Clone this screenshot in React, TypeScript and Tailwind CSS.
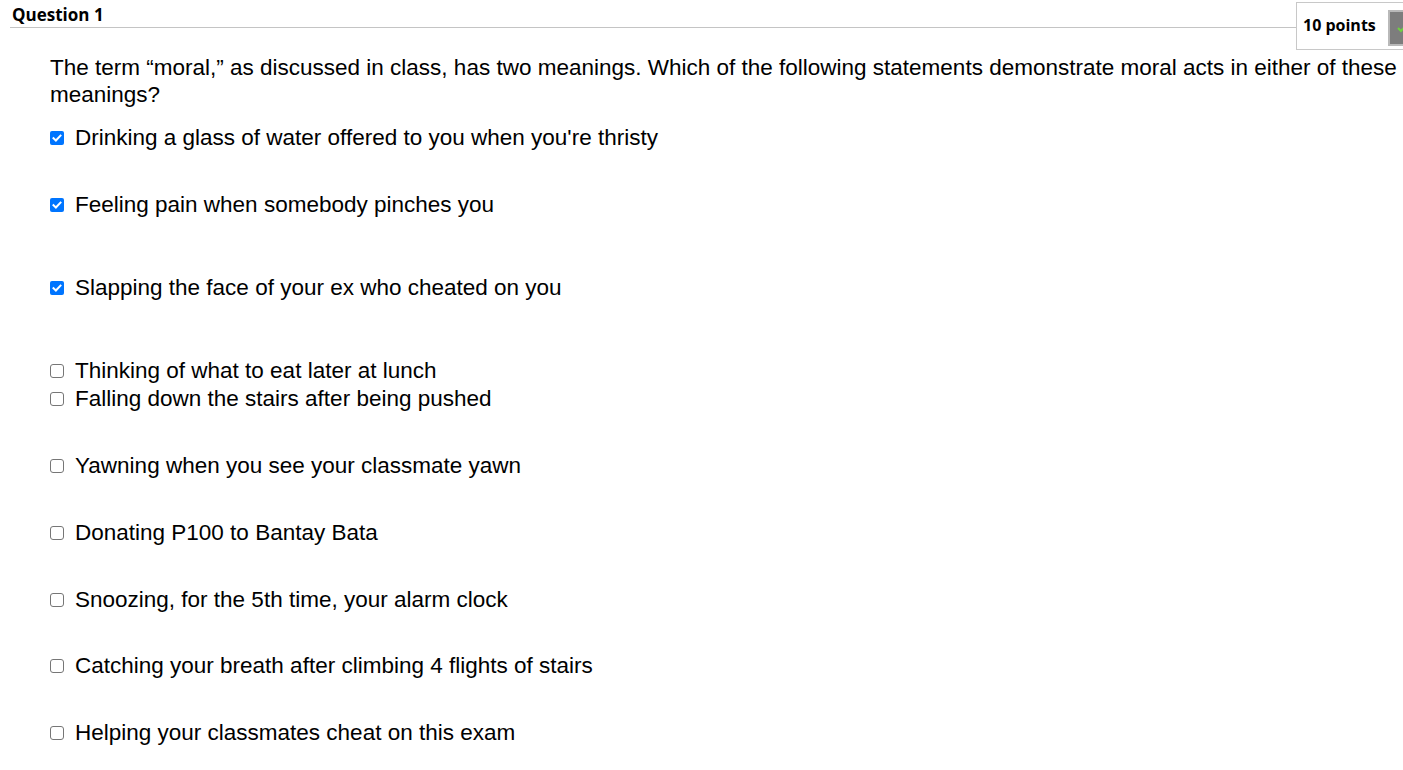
import React from 'react';

type Option = { label: string; checked: boolean; gap: string };

const OPTIONS: Option[] = [
  { label: "Drinking a glass of water offered to you when you're thristy", checked: true, gap: 'mt-[16px]' },
  { label: 'Feeling pain when somebody pinches you', checked: true, gap: 'mt-[39px]' },
  { label: 'Slapping the face of your ex who cheated on you', checked: true, gap: 'mt-[55px]' },
  { label: 'Thinking of what to eat later at lunch', checked: false, gap: 'mt-[55px]' },
  { label: 'Falling down the stairs after being pushed', checked: false, gap: 'mt-0' },
  { label: 'Yawning when you see your classmate yawn', checked: false, gap: 'mt-[39px]' },
  { label: 'Donating P100 to Bantay Bata', checked: false, gap: 'mt-[39px]' },
  { label: 'Snoozing, for the 5th time, your alarm clock', checked: false, gap: 'mt-[39px]' },
  { label: 'Catching your breath after climbing 4 flights of stairs', checked: false, gap: 'mt-[38px]' },
  { label: 'Helping your classmates cheat on this exam', checked: false, gap: 'mt-[39px]' },
];

const CheckBox: React.FC<{ checked: boolean }> = ({ checked }) =>
  checked ? (
    <span className="w-[14px] h-[14px] rounded-[2px] bg-[#0075ff] flex items-center justify-center shrink-0">
      <svg width="12" height="12" viewBox="0 0 12 12">
        <path d="M2.5 6.2 L4.9 8.5 L9.5 3.6" fill="none" stroke="#fff" strokeWidth="2" strokeLinecap="square" />
      </svg>
    </span>
  ) : (
    <span className="w-[14px] h-[14px] rounded-[3px] border border-[#767676] bg-white shrink-0" />
  );

export default function App() {
  return (
    <div className="w-[1403px] h-[770px] bg-white overflow-hidden text-black">
      <div className="flex items-start pt-[2px]">
        <div className="flex-1 ml-[10px] h-[26px] border-b border-[#c4c4c4] pl-[2px]">
          <div className="font-['Open_Sans',sans-serif] font-bold text-[17px] leading-[22px] mt-[2px]">Question 1</div>
        </div>
        <div className="w-[107px] h-[48px] border border-[#c8c8c8] border-r-0 flex items-center pl-[6px] gap-[12px] shrink-0">
          <span className="font-['Open_Sans',sans-serif] font-bold text-[16px] leading-[20px] whitespace-nowrap -mt-[2px]">10 points</span>
          <span className="w-[20px] h-[36px] bg-[#7d7d7d] border-2 border-[#b9b9b9] flex items-center justify-start pl-[7px] overflow-hidden shrink-0 mt-[3px]">
            <svg width="10" height="10" viewBox="0 0 10 10" className="shrink-0">
              <path d="M1 5 L4 8 L9 2.5" fill="none" stroke="#6fd040" strokeWidth="2" />
            </svg>
          </span>
        </div>
      </div>

      <div className="pl-[50px] pr-[4px] mt-[4px] font-['Liberation_Sans',Arial,sans-serif]">
        <p className="text-[22.5px] leading-[27px]">
          The term “moral,” as discussed in class, has two meanings. Which of the following statements demonstrate moral acts in either of these meanings?
        </p>
        <ul>
          {OPTIONS.map((o) => (
            <li key={o.label} className={`${o.gap} h-[28px] flex items-center gap-[11px] text-[22.5px] leading-[28px]`}>
              <CheckBox checked={o.checked} />
              <span className="whitespace-nowrap">{o.label}</span>
            </li>
          ))}
        </ul>
      </div>
    </div>
  );
}
